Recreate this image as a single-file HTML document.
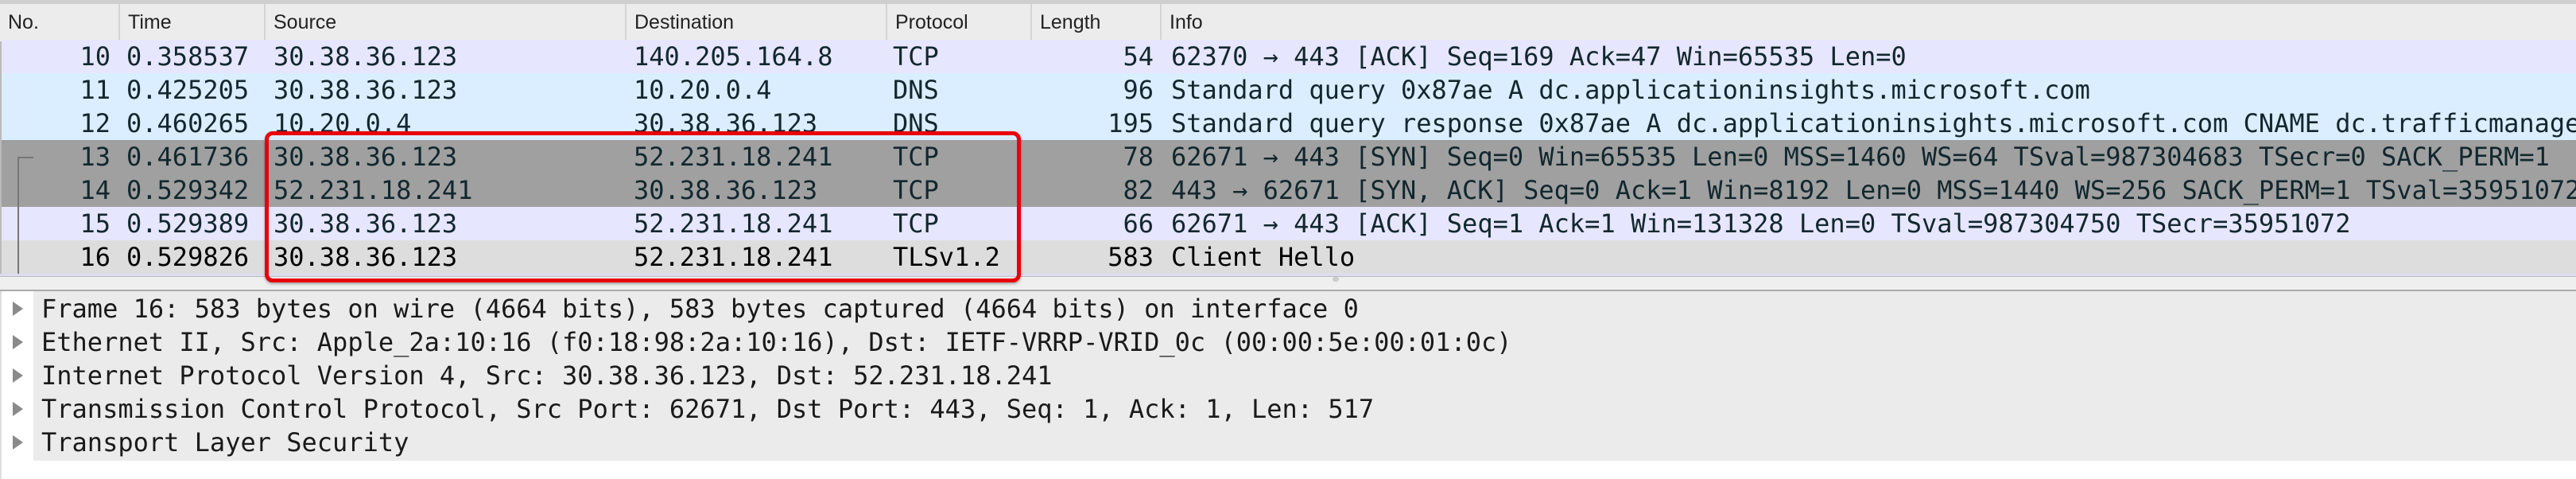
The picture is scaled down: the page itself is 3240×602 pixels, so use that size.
<!DOCTYPE html>
<html><head><meta charset="utf-8"><style>
*{margin:0;padding:0;box-sizing:border-box}
body{width:3240px;height:602px;background:#fff;position:relative;overflow:hidden;font-family:"DejaVu Sans Mono",monospace;font-size:32px;color:#12272e}
.hdr{position:absolute;left:0;top:0;width:3240px;height:52px;background:#ececec;border-top:5px solid #cfcfcf}
.hdr div{position:absolute;top:0;height:47px;line-height:47px;font-family:"Liberation Sans",sans-serif;font-size:25px;color:#222;padding-left:10px;border-left:2px solid #d4d4d4}
.row{position:absolute;left:2px;width:3238px;height:42px;line-height:42px;white-space:pre}
.row span{position:absolute;top:0}
.no{right:0;width:139px;text-align:right;left:0}
.det{position:absolute;left:42px;width:3198px;height:42px;line-height:42px;color:#1a1a1a;white-space:pre;padding-left:10px}
.tri{position:absolute;left:16px;width:0;height:0;border-top:9px solid transparent;border-bottom:9px solid transparent;border-left:13px solid #8a8a8a}
</style></head><body>
<div class="hdr">
<div style="left:0;border-left:none">No.</div>
<div style="left:149px">Time</div>
<div style="left:332px">Source</div>
<div style="left:786px">Destination</div>
<div style="left:1114px">Protocol</div>
<div style="left:1296px">Length</div>
<div style="left:1459px">Info</div>
</div>
<div style="position:absolute;left:0;top:52px;width:2px;height:296px;background:#bbb"></div>

<div class="row" style="top:50px;background:#e7e6ff"><span style="left:0;width:137px;text-align:right">10</span><span style="left:157px">0.358537</span><span style="left:342px">30.38.36.123</span><span style="left:795px">140.205.164.8</span><span style="left:1121px">TCP</span><span style="left:1300px;width:149px;text-align:right">54</span><span style="left:1471px">62370 → 443 [ACK] Seq=169 Ack=47 Win=65535 Len=0</span></div>
<div class="row" style="top:92px;background:#daeeff"><span style="left:0;width:137px;text-align:right">11</span><span style="left:157px">0.425205</span><span style="left:342px">30.38.36.123</span><span style="left:795px">10.20.0.4</span><span style="left:1121px">DNS</span><span style="left:1300px;width:149px;text-align:right">96</span><span style="left:1471px">Standard query 0x87ae A dc.applicationinsights.microsoft.com</span></div>
<div class="row" style="top:134px;background:#daeeff"><span style="left:0;width:137px;text-align:right">12</span><span style="left:157px">0.460265</span><span style="left:342px">10.20.0.4</span><span style="left:795px">30.38.36.123</span><span style="left:1121px">DNS</span><span style="left:1300px;width:149px;text-align:right">195</span><span style="left:1471px">Standard query response 0x87ae A dc.applicationinsights.microsoft.com CNAME dc.trafficmanager.net</span></div>
<div class="row" style="top:176px;background:#a0a0a0"><span style="left:0;width:137px;text-align:right">13</span><span style="left:157px">0.461736</span><span style="left:342px">30.38.36.123</span><span style="left:795px">52.231.18.241</span><span style="left:1121px">TCP</span><span style="left:1300px;width:149px;text-align:right">78</span><span style="left:1471px">62671 → 443 [SYN] Seq=0 Win=65535 Len=0 MSS=1460 WS=64 TSval=987304683 TSecr=0 SACK_PERM=1</span></div>
<div class="row" style="top:218px;background:#a0a0a0"><span style="left:0;width:137px;text-align:right">14</span><span style="left:157px">0.529342</span><span style="left:342px">52.231.18.241</span><span style="left:795px">30.38.36.123</span><span style="left:1121px">TCP</span><span style="left:1300px;width:149px;text-align:right">82</span><span style="left:1471px">443 → 62671 [SYN, ACK] Seq=0 Ack=1 Win=8192 Len=0 MSS=1440 WS=256 SACK_PERM=1 TSval=35951072 TSecr</span></div>
<div class="row" style="top:260px;background:#e7e6ff"><span style="left:0;width:137px;text-align:right">15</span><span style="left:157px">0.529389</span><span style="left:342px">30.38.36.123</span><span style="left:795px">52.231.18.241</span><span style="left:1121px">TCP</span><span style="left:1300px;width:149px;text-align:right">66</span><span style="left:1471px">62671 → 443 [ACK] Seq=1 Ack=1 Win=131328 Len=0 TSval=987304750 TSecr=35951072</span></div>
<div class="row" style="top:302px;background:#dddddd;color:#000"><span style="left:0;width:137px;text-align:right">16</span><span style="left:157px">0.529826</span><span style="left:342px">30.38.36.123</span><span style="left:795px">52.231.18.241</span><span style="left:1121px">TLSv1.2</span><span style="left:1300px;width:149px;text-align:right">583</span><span style="left:1471px">Client Hello</span></div>

<div style="position:absolute;left:22px;top:197px;width:2px;height:150px;background:#777"></div>
<div style="position:absolute;left:22px;top:197px;width:20px;height:2px;background:#777"></div>

<div style="position:absolute;left:0;top:344px;width:3240px;height:3px;background:#dcdcf0"></div>
<div style="position:absolute;left:0;top:347px;width:3240px;height:17px;background:#efefef;border-top:1px solid #bbb"></div>
<div style="position:absolute;left:1676px;top:348px;width:8px;height:6px;border-radius:4px;background:#ccc"></div>
<div style="position:absolute;left:0;top:364px;width:3240px;height:2px;background:#aaa"></div>
<div style="position:absolute;left:0;top:366px;width:2px;height:236px;background:#ddd"></div>

<div style="position:absolute;left:333px;top:165px;width:951px;height:190px;border:5px solid #e8000b;border-radius:10px;box-shadow:0 2px 3px rgba(0,0,0,.3)"></div>

<div style="position:absolute;left:42px;top:366px;width:3198px;height:213px;background:#ebebeb"></div>
<div class="tri" style="top:379px"></div><div class="det" style="top:367px">Frame 16: 583 bytes on wire (4664 bits), 583 bytes captured (4664 bits) on interface 0</div>
<div class="tri" style="top:421px"></div><div class="det" style="top:409px">Ethernet II, Src: Apple_2a:10:16 (f0:18:98:2a:10:16), Dst: IETF-VRRP-VRID_0c (00:00:5e:00:01:0c)</div>
<div class="tri" style="top:463px"></div><div class="det" style="top:451px">Internet Protocol Version 4, Src: 30.38.36.123, Dst: 52.231.18.241</div>
<div class="tri" style="top:505px"></div><div class="det" style="top:493px">Transmission Control Protocol, Src Port: 62671, Dst Port: 443, Seq: 1, Ack: 1, Len: 517</div>
<div class="tri" style="top:547px"></div><div class="det" style="top:535px">Transport Layer Security</div>
</body></html>
